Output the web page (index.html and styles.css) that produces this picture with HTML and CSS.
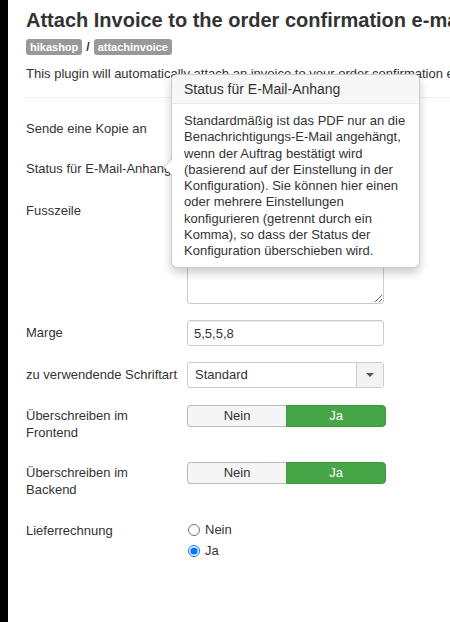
FILE: index.html
```html
<!DOCTYPE html>
<html lang="de">
<head>
    <meta charset="UTF-8">
    <meta name="viewport" content="width=device-width, initial-scale=1.0">
    <title>Attach Invoice</title>
    <link rel="stylesheet" href="styles.css">
</head>
<body>
    <div class="frame">
        <div class="sidebar"></div>
        <div class="main">
            <h1 class="page-title">Attach Invoice to the order confirmation e-mail</h1>
            <div class="plugin-path">
                <span class="badge">hikashop</span>
                <span class="sep">/</span>
                <span class="badge">attachinvoice</span>
            </div>
            <p class="intro">This plugin will automatically attach an invoice to your order confirmation e-mail.</p>
            <hr class="divider">

            <form class="settings">
                <div class="row row-first">
                    <label class="row-label">Sende eine Kopie an</label>
                    <div class="row-control"><input class="text-input" type="text" value=""></div>
                </div>
                <div class="row">
                    <label class="row-label">Status für E-Mail-Anhang</label>
                    <div class="row-control"><input class="text-input" type="text" value="confirmed"></div>
                </div>
                <div class="row">
                    <label class="row-label">Fusszeile</label>
                    <div class="row-control"><textarea class="text-area"></textarea></div>
                </div>
                <div class="row">
                    <label class="row-label">Marge</label>
                    <div class="row-control"><input class="text-input" type="text" value="5,5,5,8"></div>
                </div>
                <div class="row">
                    <label class="row-label">zu verwendende Schriftart</label>
                    <div class="row-control">
                        <div class="select-box">
                            <span class="select-value">Standard</span>
                            <span class="select-caret"><span class="caret"></span></span>
                        </div>
                    </div>
                </div>
                <div class="row row-toggle">
                    <label class="row-label">Überschreiben im Frontend</label>
                    <div class="row-control">
                        <div class="toggle">
                            <span class="toggle-btn">Nein</span>
                            <span class="toggle-btn active">Ja</span>
                        </div>
                    </div>
                </div>
                <div class="row row-toggle">
                    <label class="row-label">Überschreiben im Backend</label>
                    <div class="row-control">
                        <div class="toggle">
                            <span class="toggle-btn">Nein</span>
                            <span class="toggle-btn active">Ja</span>
                        </div>
                    </div>
                </div>
                <div class="row">
                    <label class="row-label">Lieferrechnung</label>
                    <div class="row-control radios">
                        <label class="radio"><input type="radio" name="delivery"> Nein</label>
                        <label class="radio"><input type="radio" name="delivery" checked> Ja</label>
                    </div>
                </div>
            </form>
        </div>

        <div class="popover">
            <div class="popover-arrow"></div>
            <h3 class="popover-title">Status für E-Mail-Anhang</h3>
            <div class="popover-content">Standardmäßig ist das PDF nur an die Benachrichtigungs-E-Mail angehängt, wenn der Auftrag bestätigt wird (basierend auf der Einstellung in der Konfiguration). Sie können hier einen oder mehrere Einstellungen konfigurieren (getrennt durch ein Komma), so dass der Status der Konfiguration überschieben wird.</div>
        </div>
    </div>
</body>
</html>
```

FILE: styles.css
```css
body {
    margin: 0;
    font-family: "Liberation Sans", Arial, sans-serif;
    font-size: 13px;
    color: #333;
    background: #fff;
    overflow: hidden;
}
.frame {
    position: relative;
    display: flex;
    min-height: 622px;
}
.sidebar {
    width: 8px;
    flex: none;
    background: #000;
}
.main {
    flex: none;
    width: 640px;
    padding-left: 18px;
}
.page-title {
    margin: 8px 0 0;
    font-size: 20px;
    line-height: 24px;
    font-weight: bold;
    white-space: nowrap;
}
.plugin-path {
    margin-top: 7px;
    display: flex;
    align-items: center;
    height: 16px;
}
.badge {
    display: inline-block;
    background: #999;
    color: #fff;
    font-size: 11px;
    font-weight: bold;
    line-height: 14px;
    padding: 1px 4px;
    border-radius: 3px;
}
.sep {
    margin: 0 4px;
    font-weight: bold;
    font-size: 12px;
}
.intro {
    margin: 10px 0 0;
    line-height: 18px;
    white-space: nowrap;
}
.divider {
    margin: 14px 0 18px;
    border: 0;
    border-top: 1px solid #eee;
}

/* form rows: label column + control column */
.row {
    display: flex;
    margin-bottom: 16px;
}
.row-first {
    margin-bottom: 14px;
}
.row-label {
    width: 161px;
    flex: none;
    line-height: 17px;
    padding-top: 4px;
}
.row-toggle {
    min-height: 41px;
}
.row-toggle .row-label {
    width: 130px;
    padding-top: 3px;
    margin-right: 31px;
}
.row-toggle .row-control {
    padding-top: 1px;
}
.text-input {
    box-sizing: border-box;
    width: 197px;
    height: 26px;
    margin: 0;
    padding: 4px 6px;
    border: 1px solid #ccc;
    border-radius: 3px;
    font: 13px "Liberation Sans", Arial, sans-serif;
    color: #333;
    box-shadow: inset 0 1px 1px rgba(0, 0, 0, 0.075);
}
.text-area {
    box-sizing: border-box;
    display: block;
    width: 197px;
    height: 106px;
    margin: 0;
    border: 1px solid #ccc;
    border-radius: 3px;
    font: 13px "Liberation Sans", Arial, sans-serif;
}
.select-box {
    box-sizing: border-box;
    display: flex;
    width: 197px;
    height: 26px;
    border: 1px solid #ccc;
    border-radius: 3px;
    overflow: hidden;
}
.select-value {
    flex: 1;
    padding: 0 7px;
    line-height: 24px;
}
.select-caret {
    width: 26px;
    border-left: 1px solid #ccc;
    background: #f3f3f3;
    display: flex;
    align-items: center;
    justify-content: center;
}
.caret {
    width: 0;
    height: 0;
    border-top: 4px solid #555;
    border-left: 4px solid transparent;
    border-right: 4px solid transparent;
}
.toggle {
    display: flex;
    width: 199px;
    height: 22px;
}
.toggle-btn {
    box-sizing: border-box;
    flex: 1;
    text-align: center;
    line-height: 20px;
    border: 1px solid #bbb;
    background: #f5f5f5;
    color: #333;
}
.toggle-btn:first-child {
    border-radius: 4px 0 0 4px;
    border-right: 0;
}
.toggle-btn.active {
    background: #46a546;
    border-color: #3c963c;
    color: #fff;
    border-radius: 0 4px 4px 0;
}
.radios {
    padding-top: 1px;
}
.radio {
    display: flex;
    align-items: center;
    height: 21px;
}
.radio input {
    margin: 0 5px 0 1px;
    width: 12px;
    height: 12px;
}

/* help popover for the attachment status field */
.popover {
    position: absolute;
    left: 171px;
    top: 74px;
    box-sizing: border-box;
    width: 249px;
    background: #fff;
    border: 1px solid rgba(0, 0, 0, 0.2);
    border-radius: 6px;
    box-shadow: 0 5px 10px rgba(0, 0, 0, 0.2);
}
.popover-arrow,
.popover-arrow::after {
    position: absolute;
    width: 0;
    height: 0;
    border-style: solid;
}
.popover-arrow {
    left: -9px;
    top: 83px;
    border-width: 9px 9px 9px 0;
    border-color: transparent rgba(0, 0, 0, 0.2) transparent transparent;
}
.popover-arrow::after {
    content: "";
    left: 1px;
    top: -8px;
    border-width: 8px 8px 8px 0;
    border-color: transparent #fff transparent transparent;
}
.popover-title {
    margin: 0;
    padding: 5px 12px;
    font-size: 14px;
    font-weight: normal;
    line-height: 18px;
    background: #f7f7f7;
    border-bottom: 1px solid #ebebeb;
    border-radius: 5px 5px 0 0;
}
.popover-content {
    padding: 9px 12px 8px;
    line-height: 16.25px;
}
```
